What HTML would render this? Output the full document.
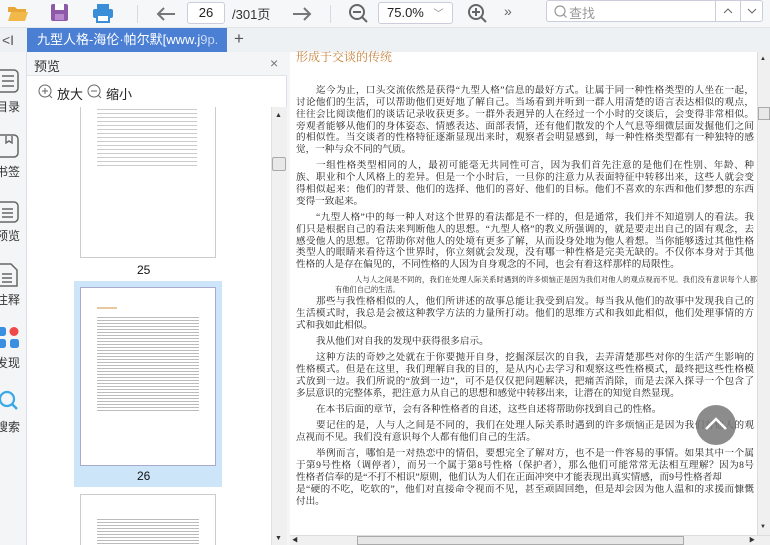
<!DOCTYPE html>
<html><head><meta charset="utf-8"><style>
*{margin:0;padding:0;box-sizing:border-box}
body{width:770px;height:545px;overflow:hidden;position:relative;background:#f3f5f7;font-family:"Liberation Sans","Noto Sans CJK SC",sans-serif;}
.a{position:absolute}
.tb{left:0;top:0;width:770px;height:28px;background:#f5f7f9;border-bottom:1px solid #e2e5e8}
.tabbar{left:0;top:28px;width:770px;height:24px;background:#eef1f4}
.doc{left:290px;top:52px;width:467px;height:483px;background:#fff}
.l{position:absolute;left:296px;width:458px;font-family:"Liberation Serif","Noto Serif CJK SC",serif;font-size:9.6px;color:#222;white-space:nowrap;text-align:justify;text-align-last:justify;line-height:12px;height:13px;overflow:hidden}
.l.i{left:316px;width:438px}
.l.e{text-align-last:left}
.side{font-size:12px;color:#333;left:-4px;width:30px}
</style></head><body>
<div class="a tb"></div>
<svg class="a" style="left:6px;top:2px" width="24" height="22"><path d="M2 5h7l2 2h9v3H2z" fill="#e8a838"/><path d="M2 19l3-9h17l-3 9z" fill="#f2b84a"/></svg>
<svg class="a" style="left:49px;top:2px" width="22" height="22"><rect x="2" y="2" width="17" height="17" rx="2" fill="#8d5aa9"/><rect x="6" y="2" width="9" height="6" fill="#fff"/><rect x="6" y="12" width="9" height="6" fill="#b889cc"/></svg>
<svg class="a" style="left:91px;top:2px" width="24" height="22"><rect x="6" y="2" width="12" height="5" fill="#3a8ed8"/><rect x="2" y="7" width="20" height="9" rx="2" fill="#3a8ed8"/><rect x="6" y="13" width="12" height="7" fill="#fff" stroke="#3a8ed8" stroke-width="2"/></svg>
<div class="a" style="left:137px;top:5px;width:1px;height:18px;background:#d8dbde"></div>
<svg class="a" style="left:155px;top:5px" width="22" height="18"><path d="M20 9H3M9 3L3 9l6 6" stroke="#777" stroke-width="2" fill="none"/></svg>
<div class="a" style="left:187px;top:2px;width:38px;height:22px;background:#fff;border:1px solid #ccd;border-radius:3px;font-size:13px;text-align:center;line-height:20px;color:#222">26</div>
<div class="a" style="left:232px;top:4px;font-size:13px;color:#333">/301页</div>
<svg class="a" style="left:291px;top:5px" width="22" height="18"><path d="M2 9h17M13 3l6 6-6 6" stroke="#777" stroke-width="2" fill="none"/></svg>
<div class="a" style="left:330px;top:5px;width:1px;height:18px;background:#d8dbde"></div>
<svg class="a" style="left:348px;top:3px" width="22" height="22"><circle cx="9" cy="9" r="7" stroke="#666" stroke-width="2" fill="none"/><path d="M5 9h8M14 14l5 5" stroke="#666" stroke-width="2"/></svg>
<div class="a" style="left:378px;top:2px;width:75px;height:22px;background:#fff;border:1px solid #ccd;border-radius:3px;font-size:13px;padding-left:8px;line-height:20px;color:#222">75.0% <span style="color:#888;font-size:10px;margin-left:6px">﹀</span></div>
<svg class="a" style="left:467px;top:3px" width="22" height="22"><circle cx="9" cy="9" r="7" stroke="#666" stroke-width="2" fill="none"/><path d="M5 9h8M9 5v8M14 14l5 5" stroke="#666" stroke-width="2"/></svg>
<div class="a" style="left:504px;top:3px;font-size:14px;color:#666">»</div>
<div class="a" style="left:546px;top:0px;width:217px;height:22px;background:#fff;border:1px solid #ccd;border-radius:3px"></div>
<svg class="a" style="left:553px;top:4px" width="16" height="16"><circle cx="7" cy="7" r="5" stroke="#999" stroke-width="1.2" fill="none"/><path d="M10.5 10.5l3 3" stroke="#999" stroke-width="1.2"/></svg>
<div class="a" style="left:569px;top:3px;font-size:13px;color:#999">查找</div>
<div class="a" style="left:715px;top:0px;width:1px;height:22px;background:#ccd"></div>
<div class="a" style="left:740px;top:0px;width:1px;height:22px;background:#ccd"></div>
<svg class="a" style="left:722px;top:6px" width="12" height="10"><path d="M2 7l4-4 4 4" stroke="#666" fill="none"/></svg>
<svg class="a" style="left:746px;top:6px" width="12" height="10"><path d="M2 3l4 4 4-4" stroke="#666" fill="none"/></svg>
<div class="a tabbar"></div>
<div class="a" style="left:2px;top:32px;font-size:14px;color:#555">&lt;I</div>
<div class="a" style="left:27px;top:28px;width:200px;height:24px;background:#4a7fd4;color:#fff;font-size:13px;line-height:24px;padding-left:10px;white-space:nowrap;overflow:hidden">九型人格-海伦·帕尔默[www.j<span style="color:#c8d8f2">9p.</span> <span style="margin-left:4px">×</span></div>
<div class="a" style="left:234px;top:29px;font-size:17px;color:#555">+</div>
<div class="a" style="left:0;top:52px;width:27px;height:493px;background:#f3f5f7;border-right:1px solid #dde"></div>
<svg class="a" style="left:0;top:68px" width="20" height="26"><rect x="-4" y="2" width="22" height="22" rx="4" stroke="#666" stroke-width="1.5" fill="none"/><path d="M2 8h12M2 13h12M2 18h12" stroke="#666" stroke-width="1.5"/></svg>
<div class="a side" style="top:98px">目录</div>
<svg class="a" style="left:0;top:133px" width="20" height="26"><rect x="-4" y="2" width="22" height="22" rx="4" stroke="#666" stroke-width="1.5" fill="none"/><path d="M6 3v7l3-2 3 2V3" stroke="#666" stroke-width="1.4" fill="none"/></svg>
<div class="a side" style="top:163px">书签</div>
<svg class="a" style="left:0;top:198px" width="24" height="26"><rect x="-4" y="4" width="22" height="20" rx="4" stroke="#666" stroke-width="1.5" fill="#f3f5f7"/><path d="M2 11h11M2 15h11M2 19h11" stroke="#666" stroke-width="1.5"/></svg>
<div class="a side" style="top:227px">预览</div>
<svg class="a" style="left:26px;top:200px" width="6" height="14"><path d="M5 0L0 7l5 7" fill="#fff" stroke="#dde"/></svg>
<svg class="a" style="left:0;top:262px" width="20" height="26"><path d="M-4 2h15l6 6v16H-4z" stroke="#666" stroke-width="1.5" fill="none"/><path d="M2 12h10M2 16h10M2 20h10" stroke="#666" stroke-width="1.5"/></svg>
<div class="a side" style="top:291px">注释</div>
<svg class="a" style="left:0;top:326px" width="22" height="24"><rect x="-3" y="1" width="9" height="9" rx="2.5" fill="#3b8fe0"/><circle cx="14" cy="5.5" r="4.5" fill="#f04848"/><rect x="-3" y="13" width="9" height="9" rx="2.5" fill="#3b8fe0"/><rect x="10" y="13" width="9" height="9" rx="2.5" fill="#3b8fe0"/></svg>
<div class="a side" style="top:354px">发现</div>
<svg class="a" style="left:0;top:390px" width="22" height="24"><circle cx="7" cy="9" r="7" stroke="#3ba8e8" stroke-width="2.2" fill="none"/><path d="M12 14l5 5" stroke="#3ba8e8" stroke-width="2.5"/></svg>
<div class="a side" style="top:418px">搜索</div>
<div class="a" style="left:27px;top:52px;width:260px;height:493px;background:#fff;border-right:1px solid #dde"></div>
<div class="a" style="left:27px;top:52px;width:260px;height:24px;background:#f3f5f7;border-bottom:1px solid #e2e4e6"></div>
<div class="a" style="left:34px;top:56px;font-size:13px;color:#333">预览</div>
<div class="a" style="left:270px;top:55px;font-size:14px;color:#777">×</div>
<svg class="a" style="left:38px;top:84px" width="16" height="16"><circle cx="7" cy="7" r="6" stroke="#666" fill="none"/><path d="M4 7h6M7 4v6M11 11l3 3" stroke="#666"/></svg>
<div class="a" style="left:57px;top:84px;font-size:13px;color:#222">放大</div>
<svg class="a" style="left:87px;top:84px" width="16" height="16"><circle cx="7" cy="7" r="6" stroke="#666" fill="none"/><path d="M4 7h6M11 11l3 3" stroke="#666"/></svg>
<div class="a" style="left:106px;top:84px;font-size:13px;color:#222">缩小</div>
<div class="a" style="left:27px;top:107px;width:244px;height:438px;overflow:hidden">
 <div class="a" style="left:53px;top:-1px;width:136px;height:152px;background:#fff;border:1px solid #ccc"></div>
 <div class="a" style="left:70px;top:0;width:100px;height:60px;background:repeating-linear-gradient(#fff 0 2px,#ccc 2px 3px,#fff 3px 4px)"></div>
 <div class="a" style="left:110px;top:156px;font-size:12px;color:#111">25</div>
 <div class="a" style="left:47px;top:174px;width:148px;height:206px;background:#cde5f8"></div>
 <div class="a" style="left:53px;top:180px;width:136px;height:179px;background:#fff;border:1px solid #aac"></div>
 <div class="a" style="left:70px;top:200px;width:20px;height:2px;background:#e8c8a0"></div>
 <div class="a" style="left:70px;top:209px;width:102px;height:96px;background:repeating-linear-gradient(#fff 0 1px,#bbb 1px 2px,#fff 2px 3px)"></div>
 <div class="a" style="left:110px;top:362px;font-size:12px;color:#111">26</div>
 <div class="a" style="left:53px;top:387px;width:136px;height:60px;background:#fff;border:1px solid #ccc"></div>
 <div class="a" style="left:70px;top:410px;width:102px;height:30px;background:repeating-linear-gradient(#fff 0 2px,#bbb 2px 3px)"></div>
</div>
<div class="a" style="left:271px;top:107px;width:16px;height:438px;background:#f0f0f0;border-left:1px solid #e0e0e0"></div>
<div class="a" style="left:275px;top:112px;font-size:7px;color:#333">▲</div>
<div class="a" style="left:272px;top:157px;width:14px;height:14px;background:#e8e8e8;border:1px solid #aaa;border-radius:2px"></div>
<div class="a" style="left:275px;top:535px;font-size:7px;color:#333">▼</div>
<div class="a doc"></div>
<div class="a" style="left:757px;top:52px;width:13px;height:483px;background:#f0f0f0;border-left:1px solid #ddd"></div>
<div class="a" style="left:760px;top:56px;font-size:6px;color:#333">▲</div>
<div class="a" style="left:758px;top:107px;width:12px;height:13px;background:#e8e8e8;border:1px solid #aaa"></div>
<div class="a" style="left:760px;top:524px;font-size:6px;color:#333">▼</div>
<div class="a" style="left:290px;top:535px;width:480px;height:10px;background:#f0f0f0;border-top:1px solid #ddd"></div>
<div class="a" style="left:357px;top:536px;width:327px;height:9px;background:#e6e6e6;border:1px solid #aaa"></div>
<div class="a" style="left:292px;top:535px;font-size:6px;color:#333">◀</div>
<div class="a" style="left:749px;top:535px;font-size:6px;color:#333">▶</div>
<div class="l e" style="top:50px;left:296px;font-size:12px;color:#c8823c;line-height:14px;height:16px">形成于交谈的传统</div>
<div class="l i" style="top:85px">迄今为止，口头交流依然是获得“九型人格”信息的最好方式。让属于同一种性格类型的人坐在一起，</div>
<div class="l" style="top:97px">讨论他们的生活，可以帮助他们更好地了解自己。当场看到并听到一群人用清楚的语言表达相似的观点，</div>
<div class="l" style="top:109px">往往会比阅读他们的谈话记录收获更多。一群外表迥异的人在经过一个小时的交谈后，会变得非常相似。</div>
<div class="l" style="top:121px">旁观者能够从他们的身体姿态、情感表达、面部表情，还有他们散发的个人气息等细微层面发掘他们之间</div>
<div class="l" style="top:132px">的相似性。当交谈者的性格特征逐渐显现出来时，观察者会明显感到，每一种性格类型都有一种独特的感</div>
<div class="l e" style="top:144px">觉，一种与众不同的气质。</div>
<div class="l i" style="top:160px">一组性格类型相同的人，最初可能毫无共同性可言，因为我们首先注意的是他们在性别、年龄、种</div>
<div class="l" style="top:172px">族、职业和个人风格上的差异。但是一个小时后，一旦你的注意力从表面特征中转移出来，这些人就会变</div>
<div class="l" style="top:184px">得相似起来：他们的背景、他们的选择、他们的喜好、他们的目标。他们不喜欢的东西和他们梦想的东西</div>
<div class="l e" style="top:196px">变得一致起来。</div>
<div class="l i" style="top:212px">“九型人格”中的每一种人对这个世界的看法都是不一样的，但是通常，我们并不知道别人的看法。我</div>
<div class="l" style="top:224px">们只是根据自己的看法来判断他人的思想。“九型人格”的教义所强调的，就是要走出自己的固有观念，去</div>
<div class="l" style="top:236px">感受他人的思想。它帮助你对他人的处境有更多了解，从而设身处地为他人着想。当你能够透过其他性格</div>
<div class="l" style="top:247px">类型人的眼睛来看待这个世界时，你立刻就会发现，没有哪一种性格是完美无缺的。不仅你本身对于其他</div>
<div class="l e" style="top:259px">性格的人是存在偏见的，不同性格的人因为自身观念的不同，也会有着这样那样的局限性。</div>
<div class="l" style="top:275px;left:355px;width:402px;font-size:7.2px;height:10px;line-height:10px">人与人之间是不同的，我们在处理人际关系时遇到的许多烦恼正是因为我们对他人的观点视而不见。我们没有意识每个人都</div>
<div class="l e" style="top:285px;left:335px;font-size:7.2px;height:10px;line-height:10px">有他们自己的生活。</div>
<div class="l i" style="top:296px">那些与我性格相似的人，他们所讲述的故事总能让我受到启发。每当我从他们的故事中发现我自己的</div>
<div class="l" style="top:308px">生活模式时，我总是会被这种教学方法的力量所打动。他们的思维方式和我如此相似，他们处理事情的方</div>
<div class="l e" style="top:320px">式和我如此相似。</div>
<div class="l i e" style="top:336px">我从他们对自我的发现中获得很多启示。</div>
<div class="l i" style="top:352px">这种方法的奇妙之处就在于你要抛开自身，挖掘深层次的自我，去弄清楚那些对你的生活产生影响的</div>
<div class="l" style="top:364px">性格模式。但是在这里，我们理解自我的目的，是从内心去学习和观察这些性格模式，最终把这些性格模</div>
<div class="l" style="top:376px">式放到一边。我们所说的“放到一边”，可不是仅仅把问题解决，把痛苦消除，而是去深入探寻一个包含了</div>
<div class="l e" style="top:388px">多层意识的完整体系，把注意力从自己的思想和感觉中转移出来，让潜在的知觉自然显现。</div>
<div class="l i e" style="top:404px">在本书后面的章节，会有各种性格者的自述，这些自述将帮助你找到自己的性格。</div>
<div class="l i" style="top:420px">要记住的是，人与人之间是不同的，我们在处理人际关系时遇到的许多烦恼正是因为我们对他人的观</div>
<div class="l e" style="top:432px">点视而不见。我们没有意识每个人都有他们自己的生活。</div>
<div class="l i" style="top:448px">举例而言，哪怕是一对热恋中的情侣，要想完全了解对方，也不是一件容易的事情。如果其中一个属</div>
<div class="l" style="top:460px">于第9号性格（调停者），而另一个属于第8号性格（保护者），那么他们可能常常无法相互理解？因为8号</div>
<div class="l e" style="top:472px">性格者信奉的是“不打不相识”原则，他们认为人们在正面冲突中才能表现出真实情感，而9号性格者却</div>
<div class="l" style="top:484px">是“硬的不吃，吃软的”，他们对直接命令视而不见，甚至顽固回绝，但是却会因为他人温和的求援而慷慨</div>
<div class="l e" style="top:496px">付出。</div>
<div class="a" style="left:696px;top:405px;width:40px;height:40px;border-radius:50%;background:rgba(120,120,120,0.85)"></div>
<svg class="a" style="left:696px;top:405px" width="40" height="40"><path d="M10 24l10-10 10 10" stroke="#fff" stroke-width="2.5" fill="none"/></svg>
</body></html>
